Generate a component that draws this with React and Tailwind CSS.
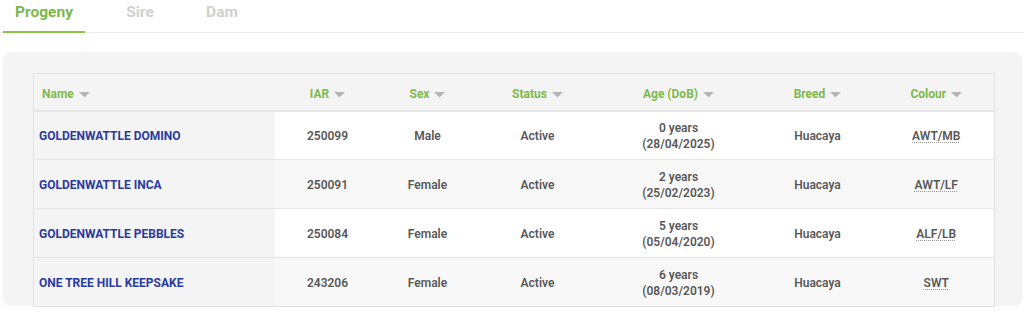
const rows = [
  { name: "GOLDENWATTLE DOMINO", iar: "250099", sex: "Male", status: "Active", age: "0 years", dob: "(28/04/2025)", breed: "Huacaya", colour: "AWT/MB" },
  { name: "GOLDENWATTLE INCA", iar: "250091", sex: "Female", status: "Active", age: "2 years", dob: "(25/02/2023)", breed: "Huacaya", colour: "AWT/LF" },
  { name: "GOLDENWATTLE PEBBLES", iar: "250084", sex: "Female", status: "Active", age: "5 years", dob: "(05/04/2020)", breed: "Huacaya", colour: "ALF/LB" },
  { name: "ONE TREE HILL KEEPSAKE", iar: "243206", sex: "Female", status: "Active", age: "6 years", dob: "(08/03/2019)", breed: "Huacaya", colour: "SWT" },
];

const Caret = () => (
  <svg width="11" height="6" viewBox="0 0 11 6" className="ml-[5px] inline-block align-middle">
    <path d="M0 0 L11 0 L5.5 5.5 Z" fill="#b5b5b5" />
  </svg>
);

const headers = [
  { label: "Name", w: "w-[241px]", align: "text-left pl-[8px]" },
  { label: "IAR", w: "w-[106px]", align: "text-center" },
  { label: "Sex", w: "w-[94px]", align: "text-center" },
  { label: "Status", w: "w-[126px]", align: "text-center" },
  { label: "Age (DoB)", w: "w-[156px]", align: "text-center" },
  { label: "Breed", w: "w-[122px]", align: "text-center" },
  { label: "Colour", w: "w-[116px]", align: "text-center" },
];

export default function App() {
  return (
    <div className="w-[1024px] h-[314px] bg-white overflow-hidden font-['Roboto',sans-serif]">
      {/* Tabs */}
      <div className="flex border-b border-[#ececec] h-[33px] pl-[3px]">
        <div className="w-[82px] flex justify-center pt-[2px] border-b-2 border-[#8bc34a] -mb-px">
          <span className="text-[15.5px] font-bold text-[#7cb84a] leading-[21px]">Progeny</span>
        </div>
        <div className="w-[110px] flex justify-center pt-[2px]">
          <span className="text-[15.5px] font-bold text-[#d0d0d0] leading-[21px]">Sire</span>
        </div>
        <div className="w-[54px] flex justify-center pt-[2px]">
          <span className="text-[15.5px] font-bold text-[#d0d0d0] leading-[21px]">Dam</span>
        </div>
      </div>

      {/* Panel */}
      <div className="mt-[19px] ml-[3px] w-[1019px] h-[254px] bg-[#f4f4f4] rounded-[8px] pt-[21px] pl-[30px]">
        <table className="border-collapse border border-[#e2e2e2] text-[12px] font-semibold text-[#585858]">
          <thead>
            <tr className="h-[37px] bg-[#f4f4f4] border-b-2 border-[#e6e6e6]">
              {headers.map((h) => (
                <th key={h.label} className={`${h.w} ${h.align} pt-[4px] font-bold text-[#7dba4b] text-[12px]`}>
                  {h.label}
                  <Caret />
                </th>
              ))}
            </tr>
          </thead>
          <tbody>
            {rows.map((r, i) => (
              <tr key={r.name} className={`h-[49px] border-t border-[#e4e4e4] ${i % 2 === 0 ? "bg-white" : "bg-[#f8f8f8]"}`}>
                <td className="bg-[#f4f4f4] pl-[5px] pt-[2px] text-left font-bold text-[#2b3a9e]">{r.name}</td>
                <td className="text-center pt-[2px]">{r.iar}</td>
                <td className="text-center pt-[2px]">{r.sex}</td>
                <td className="text-center pt-[2px]">{r.status}</td>
                <td className="text-center pt-[2px] leading-[16px]">
                  <div>{r.age}</div>
                  <div>{r.dob}</div>
                </td>
                <td className="text-center pt-[2px]">{r.breed}</td>
                <td className="text-center pt-[2px]">
                  <span className="underline decoration-dotted decoration-[#999] underline-offset-2">{r.colour}</span>
                </td>
              </tr>
            ))}
          </tbody>
        </table>
      </div>
    </div>
  );
}
